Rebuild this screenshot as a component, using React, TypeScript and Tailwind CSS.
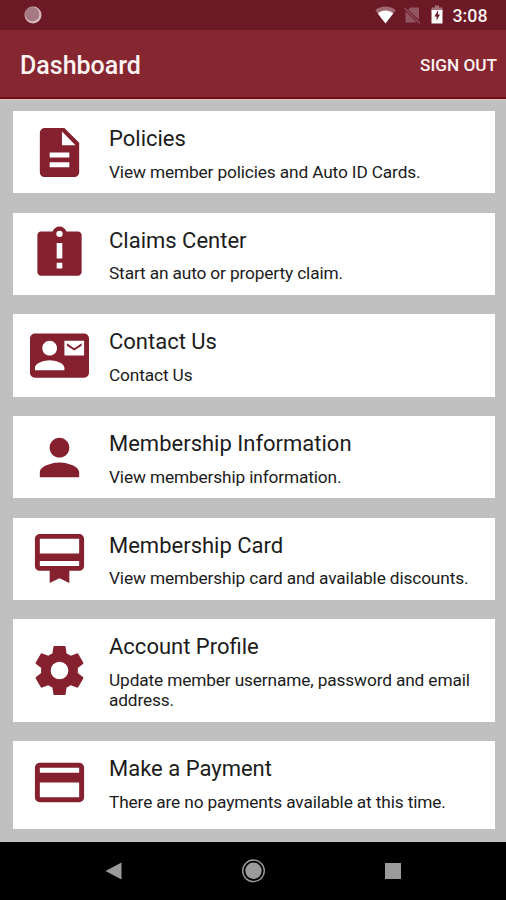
import type { ComponentType } from 'react';
import { MdCardMembership, MdContactMail, MdCreditCard, MdDescription, MdPerson } from 'react-icons/md';

interface IconProps {
  className?: string;
}

interface MenuItem {
  title: string;
  description: string;
  icon: ComponentType<IconProps>;
}

function GearIcon({ className }: IconProps) {
  return (
    <svg className={className} viewBox="0 0 24 24" fill="currentColor">
      <path d="M19.43 12.98c.04-.32.07-.64.07-.98s-.03-.66-.07-.98l2.11-1.65c.19-.15.24-.42.12-.64l-2-3.46c-.12-.22-.39-.3-.61-.22l-2.49 1c-.52-.4-1.08-.73-1.69-.98l-.38-2.65C14.46 2.18 14.25 2 14 2h-4c-.25 0-.46.18-.49.42l-.38 2.65c-.61.25-1.17.59-1.69.98l-2.49-1c-.23-.09-.49 0-.61.22l-2 3.46c-.13.22-.07.49.12.64l2.11 1.65c-.04.32-.07.65-.07.98s.03.66.07.98l-2.11 1.65c-.19.15-.24.42-.12.64l2 3.46c.12.22.39.3.61.22l2.49-1c.52.4 1.08.73 1.69.98l.38 2.65c.03.24.24.42.49.42h4c.25 0 .46-.18.49-.42l.38-2.65c.61-.25 1.17-.59 1.69-.98l2.49 1c.23.09.49 0 .61-.22l2-3.46c.12-.22.07-.49-.12-.64l-2.11-1.65zM12 15.6a3.6 3.6 0 1 1 0-7.2 3.6 3.6 0 0 1 0 7.2z" />
    </svg>
  );
}

function ClaimIcon({ className }: IconProps) {
  return (
    <svg className={className} viewBox="0 0 24 24" fill="currentColor">
      <path d="M19.5 3h-4.68C14.4 1.84 13.3 1 12 1s-2.4.84-2.82 2H4.5C3.7 3 3 3.7 3 4.5v15c0 .8.7 1.5 1.5 1.5h15c.8 0 1.5-.7 1.5-1.5v-15c0-.8-.7-1.5-1.5-1.5zM13.15 18.1h-2.3v-2.3h2.3v2.3zm0-4.1h-2.3V7.7h2.3V14zM12 5.3a1.3 1.3 0 1 1 0-2.6 1.3 1.3 0 0 1 0 2.6z" />
    </svg>
  );
}

const menuItems: MenuItem[] = [
  { title: 'Policies', description: 'View member policies and Auto ID Cards.', icon: MdDescription },
  { title: 'Claims Center', description: 'Start an auto or property claim.', icon: ClaimIcon },
  { title: 'Contact Us', description: 'Contact Us', icon: MdContactMail },
  { title: 'Membership Information', description: 'View membership information.', icon: MdPerson },
  { title: 'Membership Card', description: 'View membership card and available discounts.', icon: MdCardMembership },
  { title: 'Account Profile', description: 'Update member username, password and email address.', icon: GearIcon },
  { title: 'Make a Payment', description: 'There are no payments available at this time.', icon: MdCreditCard },
];

function StatusBar() {
  return (
    <div className="flex h-[30px] items-center justify-between bg-[#6c1926] pl-[23.5px] pr-[18.5px]">
      <svg className="h-[18px] w-[18px]" viewBox="0 0 18 18">
        <circle cx="9" cy="9" r="8.5" fill="#d9bcc0" />
        <circle cx="8.2" cy="8.2" r="7.2" fill="#a77982" />
      </svg>
      <div className="flex items-center">
        <svg className="h-[18px] w-[21px]" viewBox="0 0 21 18">
          <path d="M0.3 4.2C6-0.6 15-0.6 20.7 4.2L10.5 17.4z" fill="#fff" fillOpacity="0.35" />
          <path d="M2.8 7.4C7.3 3.6 13.7 3.6 18.2 7.4L10.5 17.4z" fill="#fff" />
        </svg>
        <svg className="ml-2 h-[18px] w-[17px]" viewBox="0 0 17 18">
          <path d="M6.5 1.5H15V14L4.2 3.8zM1.5 5.2L12.8 16.5H1.5z" fill="#925460" />
          <path d="M0.5 2L16 17.5" stroke="#925460" strokeWidth="1.3" />
        </svg>
        <svg className="ml-[10px] h-[19px] w-[12px]" viewBox="0 0 12 19">
          <path d="M4 0.5h4v2h3.5v4h-11v-4H4z" fill="#a6707a" />
          <path d="M0.5 5h11v13.5h-11z" fill="#fff" />
          <path d="M7.2 5L3.4 11.4h2.2V15.5l3.4-5.9H6.9z" fill="#6c1926" />
        </svg>
        <span className="ml-[9px] mt-[2px] text-[17.8px] font-medium leading-none text-[#f8eeee]">3:08</span>
      </div>
    </div>
  );
}

function Header() {
  return (
    <header className="flex h-[69px] items-center justify-between border-b-2 border-[#6f0d17] bg-[#852631] pl-5 pr-[9px] pt-[4px] text-[#fdf3f2]">
      <h1 className="text-[25px] font-medium">Dashboard</h1>
      <button className="text-[17.2px] font-medium">SIGN OUT</button>
    </header>
  );
}

function MenuCard({ item }: { item: MenuItem }) {
  const Icon = item.icon;
  return (
    <li className="flex items-center gap-5 bg-white pl-[17.5px] pr-4 pb-[11.5px] pt-[15px] last:pb-[17px]">
      <Icon className="-mb-[14.4px] -mt-[18.1px] h-[59px] w-[59px] shrink-0 text-[#85202f]" />
      <div className="text-[#1c1c1c]">
        <h2 className="text-[22px] leading-[25px]">{item.title}</h2>
        <p className="mt-[10.5px] text-[17.3px] leading-[20.3px] tracking-[-0.14px]">{item.description}</p>
      </div>
    </li>
  );
}

function NavBar() {
  return (
    <nav className="flex h-[58px] items-center justify-between bg-black pl-[105px] pr-[105px]">
      <svg className="h-[18px] w-[17px]" viewBox="0 0 17 18">
        <path d="M0.5 9L16.5 0.5v17z" fill="#9b9b9b" />
      </svg>
      <svg className="h-6 w-6" viewBox="0 0 24 24">
        <circle cx="11.5" cy="11.8" r="10.8" fill="none" stroke="#9b9b9b" strokeWidth="1.4" />
        <circle cx="11.5" cy="11.8" r="8.2" fill="#9b9b9b" />
      </svg>
      <div className="h-4 w-4 bg-[#9b9b9b]" />
    </nav>
  );
}

export default function App() {
  return (
    <div className="flex h-[900px] w-[506px] flex-col overflow-hidden bg-[#c0c0c0] font-['Roboto',sans-serif]">
      <StatusBar />
      <Header />
      <ul className="flex flex-1 flex-col gap-[19.4px] border-t border-[#dcc3c1] pl-[12.5px] pr-[11.5px] pt-[11px]">
        {menuItems.map((item) => (
          <MenuCard key={item.title} item={item} />
        ))}
      </ul>
      <NavBar />
    </div>
  );
}
